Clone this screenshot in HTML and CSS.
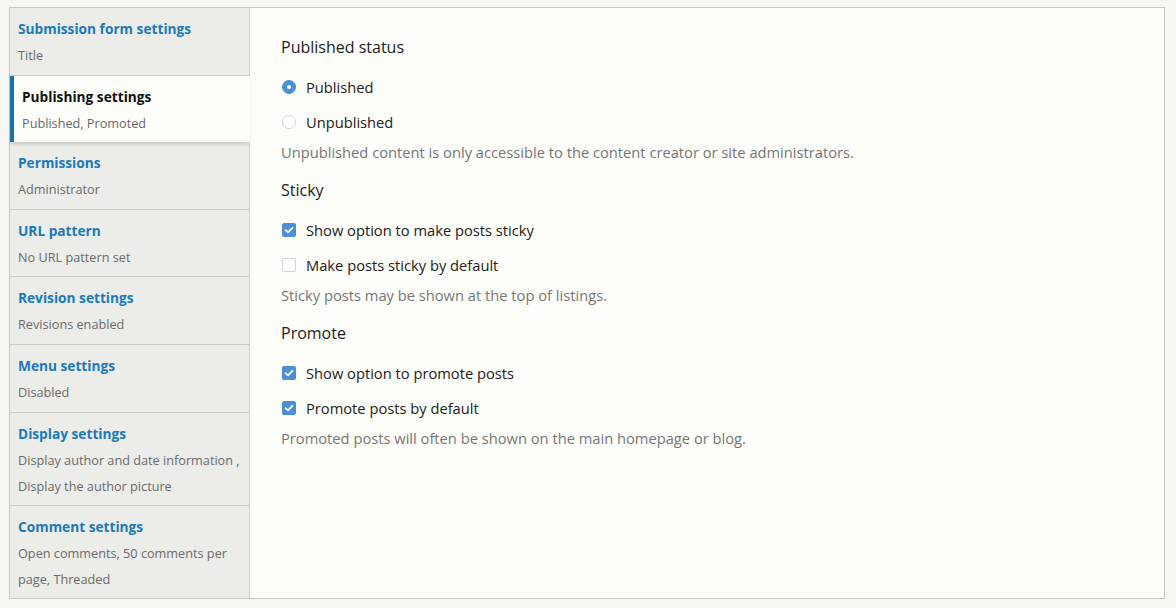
FILE: index.html
```html
<!DOCTYPE html>
<html lang="en">
<head>
<meta charset="utf-8">
<title>Content type settings</title>
<link rel="stylesheet" href="styles.css">
</head>
<body>
<div class="vt">
  <ul class="vt-menu">
    <li class="vt-item"><a class="vt-title" href="#">Submission form settings</a><div class="vt-summary">Title</div></li>
    <li class="vt-item is-selected"><a class="vt-title" href="#">Publishing settings</a><div class="vt-summary">Published, Promoted</div></li>
    <li class="vt-item"><a class="vt-title" href="#">Permissions</a><div class="vt-summary">Administrator</div></li>
    <li class="vt-item"><a class="vt-title" href="#">URL pattern</a><div class="vt-summary">No URL pattern set</div></li>
    <li class="vt-item"><a class="vt-title" href="#">Revision settings</a><div class="vt-summary">Revisions enabled</div></li>
    <li class="vt-item"><a class="vt-title" href="#">Menu settings</a><div class="vt-summary">Disabled</div></li>
    <li class="vt-item"><a class="vt-title" href="#">Display settings</a><div class="vt-summary">Display author and date information ,<br>Display the author picture</div></li>
    <li class="vt-item last"><a class="vt-title" href="#">Comment settings</a><div class="vt-summary">Open comments, 50 comments per<br>page, Threaded</div></li>
  </ul>
  <div class="vt-pane">
    <section class="group">
      <h3 class="group-title">Published status</h3>
      <label class="opt"><span class="radio checked"></span>Published</label>
      <label class="opt"><span class="radio"></span>Unpublished</label>
      <p class="desc">Unpublished content is only accessible to the content creator or site administrators.</p>
    </section>
    <section class="group">
      <h3 class="group-title">Sticky</h3>
      <label class="opt"><span class="check checked"><svg viewBox="0 0 14 14" width="14" height="14"><path d="M3.6 7.2 L6 9.4 L10.4 4.8" fill="none" stroke="#fff" stroke-width="1.8" stroke-linecap="round" stroke-linejoin="round"/></svg></span>Show option to make posts sticky</label>
      <label class="opt"><span class="check"></span>Make posts sticky by default</label>
      <p class="desc">Sticky posts may be shown at the top of listings.</p>
    </section>
    <section class="group">
      <h3 class="group-title">Promote</h3>
      <label class="opt"><span class="check checked"><svg viewBox="0 0 14 14" width="14" height="14"><path d="M3.6 7.2 L6 9.4 L10.4 4.8" fill="none" stroke="#fff" stroke-width="1.8" stroke-linecap="round" stroke-linejoin="round"/></svg></span>Show option to promote posts</label>
      <label class="opt"><span class="check checked"><svg viewBox="0 0 14 14" width="14" height="14"><path d="M3.6 7.2 L6 9.4 L10.4 4.8" fill="none" stroke="#fff" stroke-width="1.8" stroke-linecap="round" stroke-linejoin="round"/></svg></span>Promote posts by default</label>
      <p class="desc">Promoted posts will often be shown on the main homepage or blog.</p>
    </section>
  </div>
</div>
</body>
</html>
```

FILE: styles.css
```css
html, body {
  margin: 0;
  padding: 0;
}
body {
  background: #f6f6f2;
  font-family: "Open Sans", "Noto Sans", sans-serif;
  color: #222;
  padding: 7px 11px 9px 9px;
}
.vt {
  display: flex;
  height: 590px;
  border: 1px solid #c8c8c3;
  background: #fdfdf9;
}
.vt-menu {
  list-style: none;
  margin: 0;
  padding: 0;
  width: 239px;
  flex: none;
  border-right: 1px solid #cfcfca;
  background: #ecece9;
}
.vt-item {
  padding: 11px 8px 6.6px 8px;
  border-bottom: 1px solid #c9c9c5;
  position: relative;
  white-space: nowrap;
}
.vt-item.last {
  border-bottom: none;
}
.vt-item.is-selected {
  background: #fdfdf9;
  border-left: 4px solid #1b72ab;
  padding-left: 8px;
  margin-right: -1px;
  border-bottom: none;
  box-shadow: 0 3px 4px -1px rgba(0, 0, 0, 0.16);
  z-index: 1;
}
.vt-title {
  display: block;
  font-size: 13.7px;
  font-weight: 700;
  line-height: 20px;
  color: #1a7abc;
  text-decoration: none;
}
.is-selected .vt-title {
  color: #111;
}
.vt-summary {
  margin-top: 3px;
  font-size: 12.7px;
  line-height: 26px;
  color: #6b6b6b;
}
.vt-pane {
  flex: 1;
  padding: 27px 31px 0 31px;
}
.group {
  height: 143px;
}
.group-title {
  margin: 0 0 10px 0;
  font-size: 16px;
  font-weight: 400;
  line-height: 24px;
  color: #222;
}
.opt {
  display: flex;
  align-items: center;
  height: 35px;
  font-size: 14.7px;
  color: #222;
}
.radio,
.check {
  flex: none;
  width: 14px;
  height: 14px;
  box-sizing: border-box;
  margin: 0 10px 0 1px;
  background: #fff;
  border: 1px solid #d4d4d0;
  display: inline-flex;
  align-items: center;
  justify-content: center;
}
.radio {
  border-radius: 50%;
}
.radio.checked {
  background: #4a8fd8;
  border-color: #4a8fd8;
}
.radio.checked::after {
  content: "";
  width: 4px;
  height: 4px;
  border-radius: 50%;
  background: #fff;
}
.check {
  border-radius: 2px;
}
.check.checked {
  background: #4a8fd8;
  border-color: #4a8fd8;
}
.check svg {
  flex: none;
  margin: -1px;
}
.desc {
  margin: 3px 0 0 0;
  font-size: 14.7px;
  line-height: 20px;
  color: #777;
}
```
